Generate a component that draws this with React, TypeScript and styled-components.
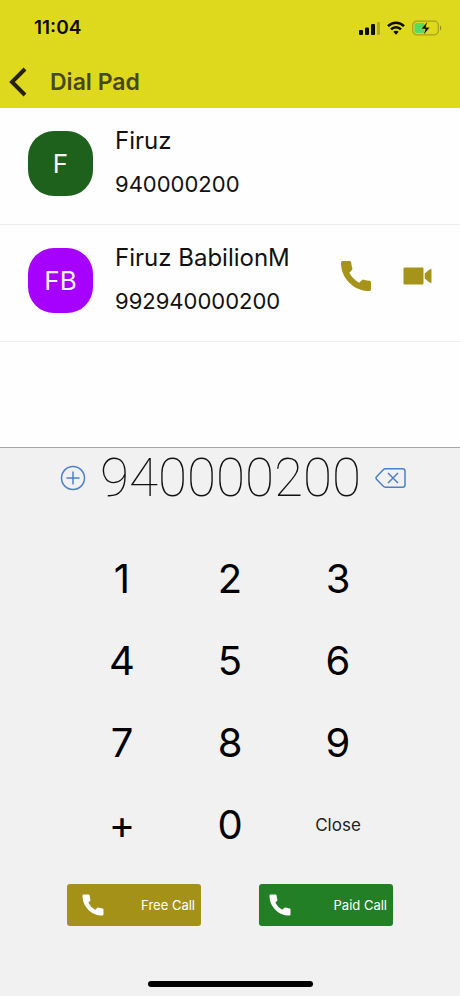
import React, { useState } from "react";
import styled, { createGlobalStyle } from "styled-components";

const GlobalStyle = createGlobalStyle`
  *, *::before, *::after { box-sizing: border-box; }
  body { margin: 0; background: #f1f1f1; font-family: Inter, "Liberation Sans", sans-serif; color: #111; }
  button { margin: 0; padding: 0; border: 0; background: none; font: inherit; color: inherit; cursor: pointer; }
  svg { display: block; flex: none; }
`;

const Page = styled.div`
  display: flex;
  flex-direction: column;
  min-height: 100vh;
  background: #fefefe;
`;

const Header = styled.header`
  background: #dfd91d;
  border-bottom: 1px solid #d3cf6a;
`;

const StatusBar = styled.div`
  display: flex;
  align-items: center;
  justify-content: space-between;
  height: 56px;
  padding: 0 18px 0 34px;
`;

const Clock = styled.time`
  font-size: 19px;
  line-height: 24px;
  font-weight: 600;
  color: #0c0c02;
`;

const StatusIcons = styled.div`
  display: flex;
  align-items: center;
  gap: 7px;
`;

const NavBar = styled.nav`
  display: flex;
  align-items: center;
  gap: 22px;
  height: 51px;
  padding: 0 8px;
`;

const Title = styled.h1`
  margin: 0;
  font-size: 23px;
  line-height: 28px;
  font-weight: 600;
  color: #48461c;
`;

const ContactList = styled.ul`
  flex: 1;
  margin: 0;
  padding: 0;
  list-style: none;
`;

const ContactRow = styled.li`
  display: flex;
  align-items: center;
  gap: 22px;
  height: 117px;
  padding: 0 28px;
  padding-bottom: 6px;
  border-bottom: 1px solid #ececec;
`;

const Avatar = styled.div<{ $color: string }>`
  display: flex;
  align-items: center;
  justify-content: center;
  flex: none;
  width: 65px;
  height: 65px;
  border-radius: 26px;
  background: ${(p) => p.$color};
  color: #f4f4f4;
  font-size: 26px;
`;

const ContactText = styled.div`
  flex: 1;
  display: flex;
  flex-direction: column;
  gap: 14px;
  padding-bottom: 2px;
  white-space: nowrap;
`;

const Name = styled.span`
  font-size: 24px;
  line-height: 30px;
`;

const Phone = styled.span`
  font-size: 22px;
  line-height: 28px;
`;

const Actions = styled.div`
  display: flex;
  align-items: center;
  gap: 27px;
  padding-bottom: 8px;
  color: #a5931a;
`;

const DialPanel = styled.section`
  display: flex;
  flex-direction: column;
  align-items: center;
  background: #f1f1f1;
  border-top: 1px solid #a6a6a6;
`;

const NumberRow = styled.div`
  display: flex;
  align-items: center;
  justify-content: center;
  gap: 14px;
  height: 60px;
  padding-left: 6px;
  color: #4c80c9;
`;

const Digits = styled.output`
  font-family: Roboto, "Liberation Sans", sans-serif;
  font-weight: 250;
  font-size: 53px;
  line-height: 60px;
  color: #111;
`;

const Keypad = styled.div`
  display: grid;
  grid-template-columns: repeat(3, 108px);
  grid-auto-rows: 82px;
  margin-top: 30px;
`;

const Key = styled.button<{ $small?: boolean }>`
  font-size: ${(p) => (p.$small ? 17 : 40)}px;
  line-height: 1;
  color: ${(p) => (p.$small ? "#222" : "#000")};
`;

const CallRow = styled.div`
  display: flex;
  gap: 58px;
  margin-top: 18px;
`;

const CallButton = styled.button<{ $color: string; $inset: number }>`
  display: flex;
  align-items: center;
  justify-content: space-between;
  width: 134px;
  height: 42px;
  padding: 0 6px 0 ${(p) => p.$inset}px;
  border-radius: 3px;
  background: ${(p) => p.$color};
  color: #fff;
  font-size: 13px;
`;

const HomeBar = styled.div`
  width: 165px;
  height: 6px;
  margin: 55px 0 9px;
  border-radius: 3px;
  background: #000;
`;

const CallIcon = ({ size }: { size: number }) => (
  <svg width={size} height={size} viewBox="0 0 24 24" fill="currentColor" aria-hidden="true">
    <path d="M4 3h4.200q.8 0 .9.800.1 1.800.7 3.500.2.600-.2 1L8 10.100q2 3.900 5.900 5.900l1.800-1.600q.4-.4 1-.2 1.700.6 3.500.7.8.1.8.9V20q0 1-1 1C10.600 21 3 13.400 3 4q0-1 1-1z" />
  </svg>
);

const VideoIcon = () => (
  <svg width="29" height="18" viewBox="0 0 29 18" fill="currentColor" aria-hidden="true">
    <path d="M2 .5h17c1 0 1.500.5 1.500 1.500v14c0 1-.5 1.500-1.500 1.500H2C1 17.500.5 17 .5 16V2C.5 1 1 .5 2 .5z" />
    <path d="M21.700 6.500 26.500 2.500 28.500 2v14l-2-.5-4.800-4z" />
  </svg>
);

const BackIcon = () => (
  <svg width="20" height="30" viewBox="0 0 20 30" fill="none" stroke="#24230a" strokeWidth="4" aria-hidden="true">
    <path d="M17 2 4 15l13 13" />
  </svg>
);

const SignalIcon = () => (
  <svg width="22" height="14" viewBox="0 0 22 14" fill="#0c0c02" aria-hidden="true">
    <rect x="1" y="9" width="4" height="5" rx="1" />
    <rect x="7" y="6.500" width="4" height="7.500" rx="1" />
    <rect x="13" y="3" width="4" height="11" rx="1" />
    <rect x="19" y="1" width="3" height="13" rx="1" opacity=".22" />
  </svg>
);

const WifiIcon = () => (
  <svg width="18" height="14" viewBox="0 0 18 14" fill="none" stroke="#0c0c02" strokeWidth="2.600" aria-hidden="true">
    <path d="M1 5.200c4.500-4.600 11.500-4.600 16 0" />
    <path d="M4 8.400c2.900-2.900 7.100-2.900 10 0" />
    <path d="M6.300 10.800c1.600-1.500 3.800-1.500 5.400 0L9 13.700z" fill="#0c0c02" stroke="none" />
  </svg>
);

const BatteryIcon = () => (
  <svg width="30" height="16" viewBox="0 0 30 16" aria-hidden="true">
    <rect x=".7" y="1.200" width="25.600" height="13.600" rx="4" fill="none" stroke="#a5a122" strokeWidth="1.200" />
    <path d="M28 5.500c1.700.8 1.700 4.200 0 5z" fill="#8c8a20" />
    <path d="M4.500 3H12v10H4.500C3 13 2.500 12.500 2.500 11V5c0-1.500.5-2 2-2z" fill="#55dc66" />
    <path d="M15.800 1 9 9h4.200l-2 6.500L18 7.200h-4.100z" fill="#0c0c02" stroke="#dfd91d" strokeWidth=".6" />
  </svg>
);

const AddIcon = () => (
  <svg width="26" height="26" viewBox="0 0 26 26" fill="none" stroke="currentColor" strokeWidth="1.500" aria-hidden="true">
    <circle cx="13" cy="13" r="11.500" />
    <path d="M13 6.500v13M6.500 13h13" />
  </svg>
);

const DeleteIcon = () => (
  <svg width="31" height="20" viewBox="0 0 31 20" fill="none" stroke="currentColor" strokeWidth="1.500" strokeLinejoin="round" aria-hidden="true">
    <path d="M10.500.8h17a2.500 2.500 0 0 1 2.500 2.500v13.400a2.500 2.500 0 0 1-2.500 2.500h-17q-1.300 0-2.200-.9L1.500 11.200q-1-1.200 0-2.400l6.800-7.100q.9-.9 2.200-.9z" />
    <path d="m13 5 10 10M23 5 13 15" />
  </svg>
);

const contacts = [
  { initials: "F", name: "Firuz", phone: "940000200", color: "#1d611c", callable: false },
  { initials: "FB", name: "Firuz BabilionM", phone: "992940000200", color: "#a600ff", callable: true },
];

const keys = ["1", "2", "3", "4", "5", "6", "7", "8", "9", "+", "0"];

export default function App() {
  const [number, setNumber] = useState("940000200");

  return (
    <Page>
      <GlobalStyle />
      <Header>
        <StatusBar>
          <Clock>11:04</Clock>
          <StatusIcons>
            <SignalIcon />
            <WifiIcon />
            <BatteryIcon />
          </StatusIcons>
        </StatusBar>
        <NavBar>
          <button type="button" aria-label="Back">
            <BackIcon />
          </button>
          <Title>Dial Pad</Title>
        </NavBar>
      </Header>

      <ContactList>
        {contacts.map((c) => (
          <ContactRow key={c.phone}>
            <Avatar $color={c.color}>{c.initials}</Avatar>
            <ContactText>
              <Name>{c.name}</Name>
              <Phone>{c.phone}</Phone>
            </ContactText>
            {c.callable && (
              <Actions>
                <button type="button" aria-label={`Call ${c.name}`}>
                  <CallIcon size={40} />
                </button>
                <button type="button" aria-label={`Video call ${c.name}`}>
                  <VideoIcon />
                </button>
              </Actions>
            )}
          </ContactRow>
        ))}
      </ContactList>

      <DialPanel>
        <NumberRow>
          <button type="button" aria-label="Add contact">
            <AddIcon />
          </button>
          <Digits>{number}</Digits>
          <button type="button" aria-label="Delete digit" onClick={() => setNumber(number.slice(0, -1))}>
            <DeleteIcon />
          </button>
        </NumberRow>
        <Keypad>
          {keys.map((k) => (
            <Key key={k} type="button" onClick={() => setNumber(number + k)}>
              {k}
            </Key>
          ))}
          <Key type="button" $small>
            Close
          </Key>
        </Keypad>
        <CallRow>
          <CallButton type="button" $color="#a39118" $inset={12}>
            <CallIcon size={28} />
            Free Call
          </CallButton>
          <CallButton type="button" $color="#237f25" $inset={7}>
            <CallIcon size={28} />
            Paid Call
          </CallButton>
        </CallRow>
        <HomeBar />
      </DialPanel>
    </Page>
  );
}
